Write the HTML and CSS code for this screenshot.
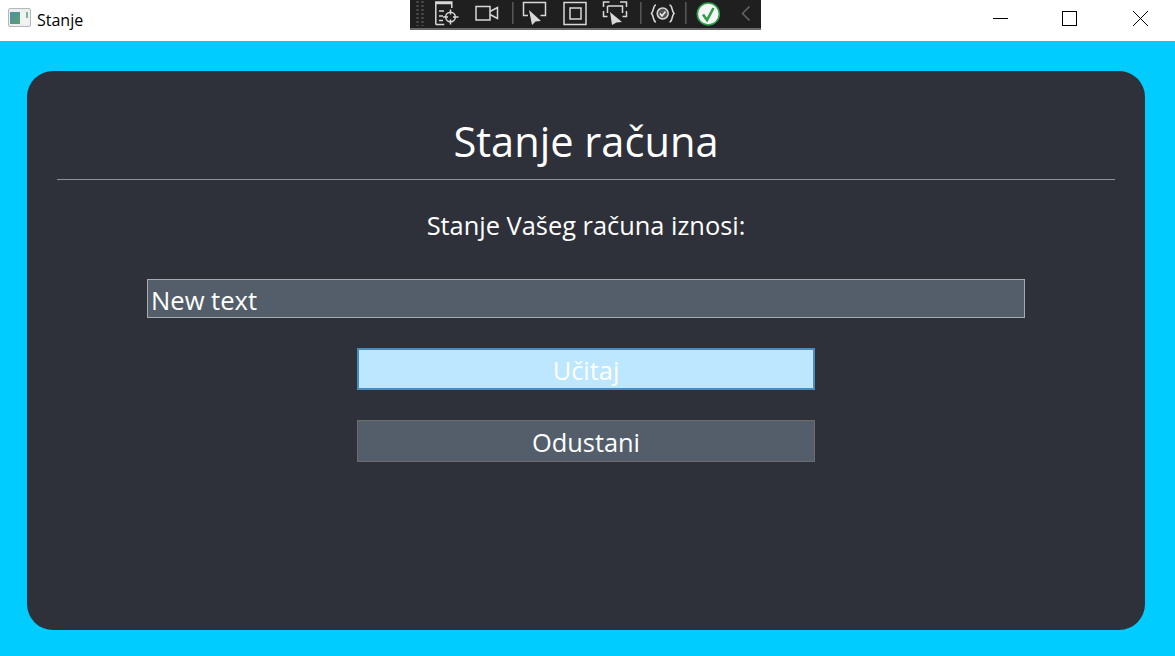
FILE: index.html
```html
<!DOCTYPE html>
<html lang="hr">
<head>
  <meta charset="UTF-8">
  <meta name="viewport" content="width=device-width, initial-scale=1.0">
  <title>Stanje</title>
  <link rel="stylesheet" href="styles.css">
</head>
<body>
  <header class="titlebar">
    <div class="app-title">
      <svg class="app-icon" width="23" height="19" viewBox="0 0 23 19">
        <defs>
          <linearGradient id="pane" x1="0" y1="0" x2="1" y2="1">
            <stop offset="0" stop-color="#4f8fa8"/>
            <stop offset="1" stop-color="#5aa06c"/>
          </linearGradient>
        </defs>
        <rect x="0.5" y="0.5" width="22" height="18" rx="1.500" fill="#eceeef" stroke="#b4b8bc"/>
        <rect x="2" y="4" width="10" height="12" fill="url(#pane)"/>
        <rect x="12" y="4" width="9" height="12" fill="#f1f3f2"/>
        <rect x="18" y="4" width="2" height="6" fill="#79b596"/>
      </svg>
      <span>Stanje</span>
    </div>
    <div class="win-controls">
      <button class="win-btn win-min">
        <svg width="16" height="16" viewBox="0 0 16 16"><path d="M0 7.500h15" stroke="#000" fill="none"/></svg>
      </button>
      <button class="win-btn">
        <svg width="16" height="16" viewBox="0 0 16 16"><rect x="0.5" y="0.5" width="14" height="14" stroke="#000" fill="none"/></svg>
      </button>
      <button class="win-btn">
        <svg width="16" height="16" viewBox="0 0 16 16"><path d="M0 0l15 15M15 0l-15 15" stroke="#000" fill="none"/></svg>
      </button>
    </div>
  </header>

  <!-- debug toolbar sits over the title bar -->
  <div class="debug-toolbar">
    <svg width="351" height="28" viewBox="0 0 351 28" fill="none" stroke="#d8d8d8" stroke-width="1.500">
      <path d="M7.500 1v25M12.500 1v25" stroke="#4a4a4a" stroke-width="2.500" stroke-dasharray="2 2"/>
      <path d="M25.800 24.500V2h16v6M25.800 3.500h16M29 11h5M29 16h4M29 20.500h4M25.800 24.500h8.500"/>
      <circle cx="40.500" cy="17" r="4.800"/>
      <path d="M40.500 9.500v5M40.500 19.500v5M33 17h5M43 17h5.500"/>
      <rect x="66" y="6.500" width="14" height="13.500"/>
      <path d="M80 11.500l7.500-4v11l-7.500-4"/>
      <path d="M102.800 2v22" stroke="#555" stroke-width="1.600"/>
      <path d="M118 15.500h-4.500V2.500h22v13h-5"/>
      <path d="M119 10l12 11-5.500 0.500-3.500 3.500z" fill="#d8d8d8" stroke="none"/>
      <rect x="154" y="2.500" width="22" height="22"/>
      <rect x="160" y="8" width="11" height="11"/>
      <path d="M193.500 7V2h6M210 2h6.500v5M193.500 11v5.500h4M216.500 11v5.500h-4M197.500 6h15v7M197.500 6v7"/>
      <path d="M200 12l12 10-5.500 0.500-4.500 2.500z" fill="#d8d8d8" stroke="none"/>
      <path d="M230.800 2v22" stroke="#555" stroke-width="1.600"/>
      <path d="M246 5c-3 0-2 6-4.500 8.500 2.500 2.500 1.500 8.500 4.500 8.500M259.500 5c3 0 2 6 4.500 8.500-2.500 2.500-1.500 8.500-4.500 8.500" stroke-width="1.600"/>
      <circle cx="252.700" cy="13.500" r="5.500" fill="#555"/>
      <path d="M250 13.500l2 2.500 3.500-4.500" stroke="#f0f0f0" stroke-width="1.500"/>
      <path d="M275.800 2v22" stroke="#555" stroke-width="1.600"/>
      <circle cx="298.300" cy="14" r="11" fill="#f5f5f5" stroke="#2e9e4a" stroke-width="1.600"/>
      <path d="M293 14.500l4 5.500 6.500-12" stroke="#2e9e4a" stroke-width="2.600"/>
      <path d="M339.500 6.500l-7 7 7 7" stroke="#666" stroke-width="1.500"/>
    </svg>
  </div>

  <main class="window-body">
    <section class="card">
      <h1 class="card-title">Stanje računa</h1>
      <hr class="divider">
      <p class="balance-label">Stanje Vašeg računa iznosi:</p>
      <input class="balance-input" type="text" value="New text">
      <button class="action-btn focused">Učitaj</button>
      <button class="action-btn">Odustani</button>
    </section>
  </main>
</body>
</html>
```

FILE: styles.css
```css
html, body {
  height: 100%;
}

body {
  margin: 0;
  display: flex;
  flex-direction: column;
  position: relative;
  font-family: "Open Sans", "Noto Sans", Arial, sans-serif;
  overflow: hidden;
}

.titlebar {
  height: 41px;
  flex: none;
  display: flex;
  justify-content: space-between;
  background-color: #fff;
}

.app-title {
  display: flex;
  align-items: center;
  gap: 6px;
  padding-left: 8px;
  padding-bottom: 2px;
  font-size: 16px;
  color: #000;
}

.app-icon {
  display: block;
  margin-bottom: 4px;
}

.win-controls {
  display: flex;
}

.win-btn {
  width: 71px;
  height: 41px;
  padding: 0 0 3px 29px;
  border: 0;
  background: none;
  display: flex;
  align-items: center;
  justify-content: flex-start;
}

.win-btn.win-min {
  width: 69px;
}

.debug-toolbar {
  position: absolute;
  left: 410px;
  top: 0;
  width: 351px;
  height: 28px;
  background-color: #1f1f1f;
  border-bottom: 2px solid #6a6a6a;
}

.debug-toolbar svg {
  display: block;
}

.window-body {
  flex: 1;
  background-color: #00ccff;
  padding: 30px 30px 26px 27px;
  display: flex;
}

.card {
  flex: 1;
  background-color: #2e3139;
  border-radius: 26px;
  display: flex;
  flex-direction: column;
  align-items: center;
  padding-top: 40px;
  color: #fff;
}

.card-title {
  margin: 0;
  font-size: 41.600px;
  font-weight: 400;
  line-height: 60px;
}

.divider {
  width: 1058px;
  margin: 8px 0 0;
  border: 0;
  border-top: 1px solid #8f9296;
}

.balance-label {
  margin: 26px 0 0;
  font-size: 25.400px;
  line-height: 38px;
}

.balance-input {
  box-sizing: border-box;
  width: 878px;
  height: 39px;
  margin: 35px 0 0;
  padding: 3px 3px 0;
  border: 1px solid #a8abae;
  background-color: #535e6a;
  color: #fff;
  font-family: inherit;
  font-size: 25.600px;
  outline: none;
}

.action-btn {
  box-sizing: border-box;
  width: 458px;
  height: 42px;
  margin-top: 30px;
  padding: 2px 0 0;
  border: 1px solid #6c6c6c;
  background-color: #535e6a;
  color: #fff;
  font-family: inherit;
  font-size: 25.400px;
}

.action-btn.focused {
  border: 2px solid #4a8cbc;
  background-color: #bde6ff;
}
```
